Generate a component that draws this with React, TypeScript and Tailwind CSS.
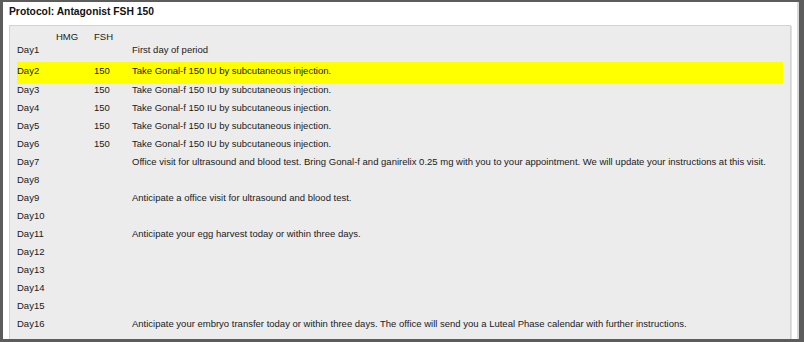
type DayRow = {
  day: string;
  hmg?: string;
  fsh?: string;
  note?: string;
  today?: boolean;
};

const gonal = "Take Gonal-f 150 IU by subcutaneous injection.";

const rows: DayRow[] = [
  { day: "Day2", fsh: "150", note: gonal, today: true },
  { day: "Day3", fsh: "150", note: gonal },
  { day: "Day4", fsh: "150", note: gonal },
  { day: "Day5", fsh: "150", note: gonal },
  { day: "Day6", fsh: "150", note: gonal },
  {
    day: "Day7",
    note: "Office visit for ultrasound and blood test. Bring Gonal-f and ganirelix 0.25 mg with you to your appointment. We will update your instructions at this visit.",
  },
  { day: "Day8" },
  { day: "Day9", note: "Anticipate a office visit for ultrasound and blood test." },
  { day: "Day10" },
  { day: "Day11", note: "Anticipate your egg harvest today or within three days." },
  { day: "Day12" },
  { day: "Day13" },
  { day: "Day14" },
  { day: "Day15" },
  {
    day: "Day16",
    note: "Anticipate your embryo transfer today or within three days. The office will send you a Luteal Phase calendar with further instructions.",
  },
];

function Row({ row }: { row: DayRow }) {
  return (
    <div
      className={
        row.today
          ? "mb-[-3px] flex h-[22px] items-start bg-[#ffff00] leading-[18px]"
          : "flex h-[18px] items-start leading-[18px]"
      }
    >
      <span className="w-[39px] shrink-0">{row.day}</span>
      <span className="w-[38px] shrink-0">{row.hmg}</span>
      <span className="w-[38px] shrink-0">{row.fsh}</span>
      <span className="whitespace-nowrap">{row.note}</span>
    </div>
  );
}

export default function App() {
  return (
    <div
      className="h-[342px] w-[804px] overflow-hidden bg-[#5c5c5c] pt-[2px] pl-[3px]"
      style={{ fontFamily: '"Liberation Sans", Arial, Helvetica, sans-serif' }}
    >
      <div className="h-[337px] w-[796px] overflow-hidden border-r-2 border-[#d9d9d9] bg-white">
        <h1 className="pt-[3px] pl-[6px] text-[10.3px] font-bold leading-[14px] text-[#111]">
          Protocol: Antagonist FSH 150
        </h1>

        <div className="mt-[6px] ml-[6px] w-[782px] border border-[#d3d3d3] bg-[#ececec] px-[7px] pt-[4px] pb-4 text-[9.5px] text-[#1a1a1a] shadow-[1px_1px_0_#e0e0e0]">
          <div className="flex h-[13px] leading-[14px]">
            <span className="w-[39px]" />
            <span className="w-[38px]">HMG</span>
            <span className="w-[38px]">FSH</span>
          </div>
          <div className="flex h-[14px] leading-[14px]">
            <span className="w-[39px] shrink-0">Day1</span>
            <span className="w-[38px] shrink-0" />
            <span className="w-[38px] shrink-0" />
            <span>First day of period</span>
          </div>
          <div className="mt-[5px]">
            {rows.map((row) => (
              <Row key={row.day} row={row} />
            ))}
          </div>
        </div>
      </div>
    </div>
  );
}
